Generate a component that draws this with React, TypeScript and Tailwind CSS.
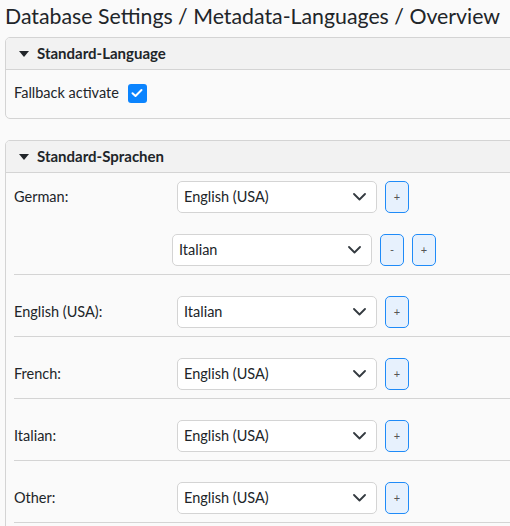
import React from 'react';

const FONT = "font-['Lato','Noto_Sans',sans-serif]";

function Caret() {
  return (
    <svg width="10" height="6" viewBox="0 0 10 6" className="shrink-0">
      <path d="M0 0 L10 0 L5 6 Z" fill="#212529" />
    </svg>
  );
}

function Chevron() {
  return (
    <svg width="13" height="8" viewBox="0 0 13 8" className="shrink-0">
      <path d="M1 1 L6.5 6.5 L12 1" fill="none" stroke="#343a40" strokeWidth="1.8" strokeLinecap="round" strokeLinejoin="round" />
    </svg>
  );
}

function SelectBox({ value, className = '' }: { value: string; className?: string }) {
  return (
    <div className={`w-[200px] h-[32px] shrink-0 flex items-center justify-between pl-[6px] pr-[10px] bg-white border border-[#d4d4d4] rounded-[5px] text-[14.5px] text-[#212529] ${className}`}>
      <span>{value}</span>
      <Chevron />
    </div>
  );
}

function SmallButton({ label }: { label: string }) {
  return (
    <button className="w-[24px] h-[32px] shrink-0 flex items-center justify-center rounded-[5px] border border-[#1f8bf8] bg-[#e7f1fd] text-[11px] text-[#555]">
      {label}
    </button>
  );
}

function PanelHeader({ title }: { title: string }) {
  return (
    <div className="h-[32px] flex items-center gap-[8px] pl-[13px] bg-[#f2f2f2] border-b border-[#d4d4d4] font-bold text-[15px] text-[#212529]">
      <Caret />
      <span>{title}</span>
    </div>
  );
}

const rows = [
  { label: 'English (USA):', value: 'Italian' },
  { label: 'French:', value: 'English (USA)' },
  { label: 'Italian:', value: 'English (USA)' },
  { label: 'Other:', value: 'English (USA)' },
];

export default function App() {
  return (
    <div className={`min-h-screen w-full overflow-hidden bg-[#fafafa] text-[#212529] ${FONT}`}>
      <h1 className="pl-[5px] text-[21.3px] leading-[32px] whitespace-nowrap">
        Database Settings / Metadata-Languages / Overview
      </h1>
      <div className="w-[530px] pl-[5px] pt-[5px]">
        {/* Standard-Language */}
        <section className="border border-[#d4d4d4] rounded-[5px] overflow-hidden bg-[#fafafa]">
          <PanelHeader title="Standard-Language" />
          <div className="h-[48px] flex items-center gap-[9px] pl-[8px] pb-[2px] text-[14.5px]">
            <span>Fallback activate</span>
            <span className="w-[19px] h-[19px] rounded-[3px] bg-[#0b84fe] flex items-center justify-center">
              <svg width="12" height="10" viewBox="0 0 12 10">
                <path d="M1.5 5.2 L4.5 8 L10.5 2" fill="none" stroke="#fff" strokeWidth="2" strokeLinecap="round" strokeLinejoin="round" />
              </svg>
            </span>
          </div>
        </section>

        {/* Standard-Sprachen */}
        <section className="mt-[21px] border border-[#d4d4d4] rounded-[5px] overflow-hidden bg-[#fafafa]">
          <PanelHeader title="Standard-Sprachen" />
          <div className="pl-[8px] pt-[8px] text-[14.5px]">
            <div className="flex items-start pb-[8px] border-b border-[#d4d4d4]">
              <div className="w-[163px] h-[32px] flex items-center shrink-0">German:</div>
              <div className="flex flex-col gap-[21px]">
                <div className="flex items-center gap-[8px]">
                  <SelectBox value="English (USA)" />
                  <SmallButton label="+" />
                </div>
                <div className="flex items-center gap-[8px] -ml-[5px]">
                  <SelectBox value="Italian" />
                  <SmallButton label="-" />
                  <SmallButton label="+" />
                </div>
              </div>
            </div>
            {rows.map((r) => (
              <div key={r.label} className="flex items-center pt-[21px] pb-[8px] border-b border-[#d4d4d4]">
                <div className="w-[163px] shrink-0">{r.label}</div>
                <div className="flex items-center gap-[8px]">
                  <SelectBox value={r.value} />
                  <SmallButton label="+" />
                </div>
              </div>
            ))}
            <div className="h-[40px]" />
          </div>
        </section>
      </div>
    </div>
  );
}
